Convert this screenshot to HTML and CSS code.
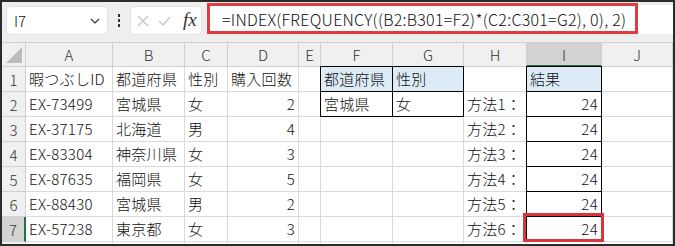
FILE: index.html
```html
<!DOCTYPE html>
<html lang="ja">
<head>
  <meta charset="UTF-8" />
  <title>FREQUENCY</title>
  <link rel="stylesheet" href="styles.css">
</head>
<body>
<div class="sheet">
  <div class="toolbar">
    <div class="namebox">
      <span>I7</span>
      <svg width="10" height="6" viewBox="0 0 10 6"><polyline points="1,1 5,5 9,1" fill="none" stroke="#333" stroke-width="1.2"/></svg>
    </div>
    <div class="dots"><i></i><i></i><i></i></div>
    <div class="fxbox">
      <svg width="12" height="12" viewBox="0 0 12 12"><path d="M1,1 L11,11 M11,1 L1,11" stroke="#c4c4c4" stroke-width="1.2"/></svg>
      <svg width="13" height="10" viewBox="0 0 13 10"><polyline points="1,5 5,9 12,1" fill="none" stroke="#c4c4c4" stroke-width="1.2"/></svg>
      <span class="fx">fx</span>
    </div>
    <div class="formula">
      <div class="formula-mark">=INDEX(FREQUENCY((B2:B301=F2)*(C2:C301=G2), 0), 2)</div>
    </div>
  </div>

  <div class="grid">
    <div class="hd corner"><svg width="16" height="16" viewBox="0 0 16 16"><polygon points="16,0 16,16 0,16" fill="#bcbcbc"/></svg></div>
    <div class="hd">A</div><div class="hd">B</div><div class="hd">C</div><div class="hd">D</div><div class="hd">E</div>
    <div class="hd">F</div><div class="hd">G</div><div class="hd">H</div><div class="hd hd-active-col">I</div><div class="hd">J</div>

    <div class="rh">1</div>
    <div class="c">暇つぶしID</div><div class="c">都道府県</div><div class="c">性別</div><div class="c">購入回数</div><div class="c"></div>
    <div class="c box blue">都道府県</div><div class="c box blue">性別</div><div class="c"></div><div class="c box blue">結果</div><div class="c"></div>

    <div class="rh">2</div>
    <div class="c">EX-73499</div><div class="c">宮城県</div><div class="c">女</div><div class="c num">2</div><div class="c"></div>
    <div class="c box">宮城県</div><div class="c box">女</div><div class="c">方法1：</div><div class="c box num">24</div><div class="c"></div>

    <div class="rh">3</div>
    <div class="c">EX-37175</div><div class="c">北海道</div><div class="c">男</div><div class="c num">4</div><div class="c"></div>
    <div class="c"></div><div class="c"></div><div class="c">方法2：</div><div class="c box num">24</div><div class="c"></div>

    <div class="rh">4</div>
    <div class="c">EX-83304</div><div class="c">神奈川県</div><div class="c">女</div><div class="c num">3</div><div class="c"></div>
    <div class="c"></div><div class="c"></div><div class="c">方法3：</div><div class="c box num">24</div><div class="c"></div>

    <div class="rh">5</div>
    <div class="c">EX-87635</div><div class="c">福岡県</div><div class="c">女</div><div class="c num">5</div><div class="c"></div>
    <div class="c"></div><div class="c"></div><div class="c">方法4：</div><div class="c box num">24</div><div class="c"></div>

    <div class="rh">6</div>
    <div class="c">EX-88430</div><div class="c">宮城県</div><div class="c">男</div><div class="c num">2</div><div class="c"></div>
    <div class="c"></div><div class="c"></div><div class="c">方法5：</div><div class="c box num">24</div><div class="c"></div>

    <div class="rh rh-active-row">7</div>
    <div class="c">EX-57238</div><div class="c">東京都</div><div class="c">女</div><div class="c num">3</div><div class="c"></div>
    <div class="c"></div><div class="c"></div><div class="c">方法6：</div><div class="c box num selected">24<span class="mark"></span></div><div class="c"></div>

    <div class="rh"></div>
    <div class="c"></div><div class="c"></div><div class="c"></div><div class="c"></div><div class="c"></div>
    <div class="c"></div><div class="c"></div><div class="c"></div><div class="c"></div><div class="c"></div>
  </div>
</div>
</body>
</html>
```

FILE: styles.css
```css
body {
  margin: 0;
  background: #fff;
}
.sheet {
  width: 675px;
  height: 246px;
  box-sizing: border-box;
  border: 2px solid #2b2b2b;
  background: #eeeeee;
  overflow: hidden;
  font-family: "Noto Sans CJK JP", "Noto Sans", sans-serif;
  font-weight: 300;
  color: #111;
}

/* toolbar */
.toolbar {
  display: flex;
  align-items: flex-start;
  height: 40px;
  padding-left: 4px;
}
.namebox {
  width: 102px;
  height: 29px;
  margin-top: 4px;
  box-sizing: border-box;
  background: #fff;
  border: 1px solid #e2e2e2;
  border-radius: 5px;
  display: flex;
  align-items: center;
  justify-content: space-between;
  padding: 0 7px 0 7px;
  font-size: 15px;
}
.dots {
  width: 22px;
  height: 29px;
  margin-top: 4px;
  display: flex;
  flex-direction: column;
  align-items: center;
  justify-content: center;
  gap: 2px;
}
.dots i {
  display: block;
  width: 2px;
  height: 3px;
  background: #333;
}
.fxbox {
  width: 72px;
  height: 29px;
  margin-top: 4px;
  box-sizing: border-box;
  background: #fff;
  border: 1px solid #e2e2e2;
  border-radius: 5px;
  display: flex;
  align-items: center;
  padding-left: 6px;
  gap: 9px;
}
.fx {
  font-family: "Liberation Serif", serif;
  font-style: italic;
  font-weight: 400;
  font-size: 19px;
  color: #333;
  margin-left: 3px;
  margin-top: -2px;
}
.formula {
  flex: 1;
  height: 29px;
  margin-top: 3px;
  margin-left: 5px;
  background: #fff;
}
.formula-mark {
  width: 431px;
  height: 31px;
  margin-top: -2px;
  box-sizing: border-box;
  border: 3px solid #e23b40;
  padding-left: 12px;
  display: flex;
  align-items: center;
  font-size: 16px;
  letter-spacing: 0.25px;
  white-space: nowrap;
}

/* grid */
.grid {
  display: grid;
  grid-template-columns: 24px 87px 72px 43px 71px 22px 72px 71px 63px 75px 71px;
  grid-template-rows: 24px repeat(8, 25px);
  border-top: 1px solid #d0d0d0;
  background: #fff;
  font-size: 15px;
}
.hd, .rh {
  background: #f0f0f0;
  border-right: 1px solid #d0d0d0;
  border-bottom: 1px solid #d0d0d0;
  box-sizing: border-box;
  display: flex;
  align-items: center;
  justify-content: center;
  color: #333;
}
.corner {
  align-items: flex-end;
  justify-content: flex-end;
  padding: 0 3px 3px 0;
}
.hd-active-col {
  background: #d3d3d3;
  border-bottom: 2px solid #217346;
}
.rh-active-row {
  background: #d3d3d3;
  border-right: 2px solid #217346;
}
.c {
  border-right: 1px solid #dadada;
  border-bottom: 1px solid #dadada;
  box-sizing: border-box;
  padding: 0 3px;
  line-height: 24px;
  letter-spacing: 0.3px;
  white-space: nowrap;
  overflow: hidden;
}
.num {
  text-align: right;
}
.box {
  border-right-color: #000;
  border-bottom-color: #000;
  box-shadow: -1px 0 0 #000, 0 -1px 0 #000, -1px -1px 0 #000;
}
.blue {
  background: #ddebf7;
}
.selected {
  position: relative;
  overflow: visible;
}
.mark {
  position: absolute;
  left: -4px;
  top: -4px;
  right: -3px;
  bottom: -1px;
  border: 3px solid #d9363b;
}
```
